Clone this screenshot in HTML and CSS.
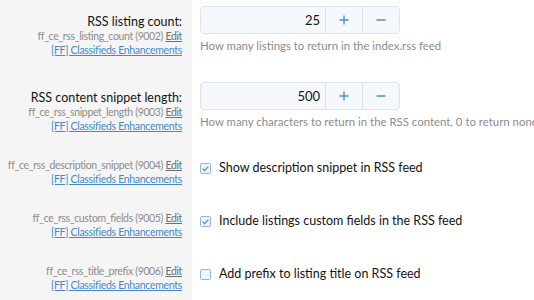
FILE: index.html
```html
<!DOCTYPE html>
<html lang="en">
<head>
  <meta charset="UTF-8" />
  <title>Options – Classifieds Enhancements</title>
  <meta name="viewport" content="width=device-width, initial-scale=1" />
  <link rel="stylesheet" href="styles.css">
</head>
<body>
  <main class="options">

    <!-- listing count -->
    <dl class="form-row">
      <dt class="row-label">
        <div class="label">RSS listing count:</div>
        <div class="hint">ff_ce_rss_listing_count (9002) <a href="#" class="edit">Edit</a></div>
        <a href="#" class="addon">[FF] Classifieds Enhancements</a>
      </dt>
      <dd class="row-input">
        <div class="spinbox">
          <input type="text" class="spinbox-value" value="25" />
          <button type="button" class="spinbox-btn" aria-label="Increase">
            <svg viewBox="0 0 10 10"><path d="M5 0.5v9M0.5 5h9" /></svg>
          </button>
          <button type="button" class="spinbox-btn" aria-label="Decrease">
            <svg viewBox="0 0 10 10"><path d="M0.5 5h9" /></svg>
          </button>
        </div>
        <p class="explain">How many listings to return in the index.rss feed</p>
      </dd>
    </dl>

    <!-- snippet length -->
    <dl class="form-row">
      <dt class="row-label">
        <div class="label">RSS content snippet length:</div>
        <div class="hint">ff_ce_rss_snippet_length (9003) <a href="#" class="edit">Edit</a></div>
        <a href="#" class="addon">[FF] Classifieds Enhancements</a>
      </dt>
      <dd class="row-input">
        <div class="spinbox">
          <input type="text" class="spinbox-value" value="500" />
          <button type="button" class="spinbox-btn" aria-label="Increase">
            <svg viewBox="0 0 10 10"><path d="M5 0.5v9M0.5 5h9" /></svg>
          </button>
          <button type="button" class="spinbox-btn" aria-label="Decrease">
            <svg viewBox="0 0 10 10"><path d="M0.5 5h9" /></svg>
          </button>
        </div>
        <p class="explain">How many characters to return in the RSS content, 0 to return none</p>
      </dd>
    </dl>

    <!-- description snippet -->
    <dl class="form-row">
      <dt class="row-label">
        <div class="hint">ff_ce_rss_description_snippet (9004) <a href="#" class="edit">Edit</a></div>
        <a href="#" class="addon">[FF] Classifieds Enhancements</a>
      </dt>
      <dd class="row-input">
        <label class="check">
          <svg class="check-box" viewBox="0 0 11 11"><rect x="0.5" y="0.5" width="10" height="10" rx="1" /><path class="tick" d="M2.6 5.6l2 2 3.8-4" /></svg>
          <span>Show description snippet in RSS feed</span>
        </label>
      </dd>
    </dl>

    <!-- custom fields -->
    <dl class="form-row">
      <dt class="row-label">
        <div class="hint">ff_ce_rss_custom_fields (9005) <a href="#" class="edit">Edit</a></div>
        <a href="#" class="addon">[FF] Classifieds Enhancements</a>
      </dt>
      <dd class="row-input">
        <label class="check">
          <svg class="check-box" viewBox="0 0 11 11"><rect x="0.5" y="0.5" width="10" height="10" rx="1" /><path class="tick" d="M2.6 5.6l2 2 3.8-4" /></svg>
          <span>Include listings custom fields in the RSS feed</span>
        </label>
      </dd>
    </dl>

    <!-- title prefix -->
    <dl class="form-row">
      <dt class="row-label">
        <div class="hint">ff_ce_rss_title_prefix (9006) <a href="#" class="edit">Edit</a></div>
        <a href="#" class="addon">[FF] Classifieds Enhancements</a>
      </dt>
      <dd class="row-input">
        <label class="check">
          <svg class="check-box" viewBox="0 0 11 11"><rect x="0.5" y="0.5" width="10" height="10" rx="1" /></svg>
          <span>Add prefix to listing title on RSS feed</span>
        </label>
      </dd>
    </dl>

  </main>
</body>
</html>
```

FILE: styles.css
```css
:root {
  --side-bg: #f5f5f5;
  --text: #141414;
  --muted: #8c8c8c;
  --link: #4489cc;
  --input-bg: #f5f8fc;
  --input-border: #dde3ea;
  --accent: #4a8fd3;
}

* { box-sizing: border-box; margin: 0; padding: 0; }

html, body {
  width: 100%; height: 100%;
  background: #fff;
  color: var(--text);
  font-family: "Lato", "Open Sans", sans-serif;
  overflow: hidden;
}

.form-row {
  display: grid;
  grid-template-columns: 192px 1fr;
}

.row-label {
  background: var(--side-bg);
  text-align: right;
  white-space: nowrap;
  padding: 6px 10px 19px 0;
}

.row-label .label {
  font-size: 12.5px;
  line-height: 15px;
  padding-top: 8px;
  color: var(--text);
}

.row-label .hint {
  font-size: 10.5px;
  line-height: 14px;
  letter-spacing: -0.35px;
  color: var(--muted);
}

.row-label .edit {
  color: #6e6e6e;
  text-decoration: underline;
}

.row-label .addon {
  display: block;
  font-size: 10.5px;
  line-height: 14px;
  letter-spacing: -0.3px;
  color: var(--link);
  text-decoration: underline;
}

.row-input {
  padding: 6px 0 0 8px;
  white-space: nowrap;
  min-width: 0;
}

.spinbox {
  display: flex;
  width: 200px;
  height: 28px;
  border: 1px solid var(--input-border);
  border-radius: 4px;
  background: var(--input-bg);
  overflow: hidden;
}

.spinbox-value {
  flex: 1;
  min-width: 0;
  border: none;
  background: none;
  outline: none;
  text-align: right;
  padding-right: 5px;
  font: 13px "Lato", "Open Sans", sans-serif;
  color: var(--text);
}

.spinbox-btn {
  width: 37px;
  border: none;
  border-left: 1px solid var(--input-border);
  background: none;
  display: flex;
  align-items: center;
  justify-content: center;
  cursor: pointer;
}
.spinbox-btn svg {
  width: 10px;
  height: 10px;
  stroke: var(--accent);
  stroke-width: 1.4;
  fill: none;
}

.explain {
  margin-top: 4px;
  font-size: 11.4px;
  line-height: 16px;
  color: var(--muted);
}

.check {
  display: flex;
  align-items: center;
  gap: 8px;
  font-size: 12.5px;
  line-height: 20px;
  color: var(--text);
  cursor: pointer;
}

.check-box {
  width: 11px;
  height: 11px;
  flex: none;
}
.check-box rect {
  fill: #eef4fb;
  stroke: #93b4d6;
}
.check-box .tick {
  fill: none;
  stroke: var(--accent);
  stroke-width: 1.3;
}
```
